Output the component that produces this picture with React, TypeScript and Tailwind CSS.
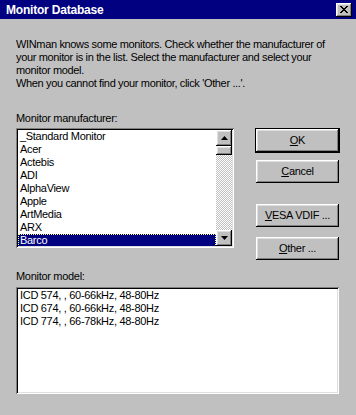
import React from "react";

const raised =
  "bg-[#c0c0c0] shadow-[inset_-1px_-1px_#000,inset_1px_1px_#fff,inset_-2px_-2px_#808080,inset_2px_2px_#dfdfdf]";
const sunken =
  "bg-white shadow-[inset_1px_1px_#808080,inset_-1px_-1px_#fff,inset_2px_2px_#000,inset_-2px_-2px_#dfdfdf]";

const manufacturers = [
  "_Standard Monitor",
  "Acer",
  "Actebis",
  "ADI",
  "AlphaView",
  "Apple",
  "ArtMedia",
  "ARX",
  "Barco",
];

const models = [
  "ICD 574, , 60-66kHz, 48-80Hz",
  "ICD 674, , 60-66kHz, 48-80Hz",
  "ICD 774, , 66-78kHz, 48-80Hz",
];

const Arrow = ({ up }: { up?: boolean }) => (
  <svg width="7" height="4" viewBox="0 0 7 4" className="block">
    {up ? <path d="M3.5 0 7 4H0z" fill="#000" /> : <path d="M0 0h7L3.5 4z" fill="#000" />}
  </svg>
);

const Btn = ({
  children,
  isDefault,
  className = "",
}: {
  children: React.ReactNode;
  isDefault?: boolean;
  className?: string;
}) => (
  <button
    type="button"
    className={`${raised} h-[23px] w-[83px] flex items-center justify-center text-black ${
      isDefault ? "outline outline-1 outline-black" : ""
    } ${className}`}
  >
    {children}
  </button>
);

export default function App() {
  return (
    <div
      className="w-[356px] h-[415px] bg-[#c0c0c0] text-[11px] leading-[13px] tracking-[-0.3px] text-black overflow-hidden"
      style={{ fontFamily: '"Liberation Sans", Arial, sans-serif' }}
    >
      {/* title bar */}
      <div className="h-[19px] bg-[#000080] flex items-center pl-[6px] pr-[4px]">
        <span className="flex-1 text-white font-bold text-[12px] tracking-[-0.2px] pt-[1px]">
          Monitor Database
        </span>
        <div className={`${raised} w-[16px] h-[14px] flex items-center justify-center`}>
          <svg width="8" height="7" viewBox="0 0 8 7" className="block">
            <path
              d="M0 0h2v1h1v1h2V1h1V0h2v1H7v1H6v1H5v1h1v1h1v1h1v1H6V6H5V5H3v1H2v1H0V6h1V5h1V4h1V3H2V2H1V1H0z"
              fill="#000"
            />
          </svg>
        </div>
      </div>

      <div className="pl-4">
        <div className="mt-[19px] whitespace-nowrap tracking-[-0.35px]">
          <div>WINman knows some monitors. Check whether the manufacturer of</div>
          <div>your monitor is in the list. Select the manufacturer and select your</div>
          <div>monitor model.</div>
          <div>When you cannot find your monitor, click 'Other ...'.</div>
        </div>

        <div className="mt-[22px]">Monitor manufacturer:</div>

        <div className="mt-[3px] flex items-start">
          {/* manufacturer list */}
          <div className={`${sunken} w-[218px] h-[120px] p-[2px] flex`}>
            <div className="flex-1 overflow-hidden">
              {manufacturers.map((m) => (
                <div
                  key={m}
                  className={`h-[13px] pl-[2px] whitespace-nowrap ${
                    m === "Barco"
                      ? "bg-[#000080] text-white outline outline-1 outline-dotted outline-[#ffff80] -outline-offset-1"
                      : ""
                  }`}
                >
                  {m}
                </div>
              ))}
            </div>
            <div className="w-[16px] flex flex-col">
              <div className={`${raised} h-[16px] flex items-center justify-center`}>
                <Arrow up />
              </div>
              <div className={`${raised} h-[9px]`} />
              <div className="flex-1 bg-[image:repeating-conic-gradient(#fff_0_25%,#c0c0c0_0_50%)] bg-[length:2px_2px]" />
              <div className={`${raised} h-[16px] flex items-center justify-center`}>
                <Arrow />
              </div>
            </div>
          </div>

          {/* buttons */}
          <div className="ml-[22px] pt-[1px] flex flex-col">
            <Btn isDefault>
              <span>
                <u>O</u>K
              </span>
            </Btn>
            <Btn className="mt-[8px]">
              <span>
                <u>C</u>ancel
              </span>
            </Btn>
            <Btn className="mt-[21px]">
              <span>
                <u>V</u>ESA VDIF ...
              </span>
            </Btn>
            <Btn className="mt-[10px]">
              <span>
                <u>O</u>ther ...
              </span>
            </Btn>
          </div>
        </div>

        <div className="mt-[10px]">Monitor model:</div>

        <div className={`${sunken} mt-[4px] w-[323px] h-[107px] p-[2px]`}>
          {models.map((m) => (
            <div key={m} className="h-[13px] pl-[2px] whitespace-nowrap">
              {m}
            </div>
          ))}
        </div>
      </div>
    </div>
  );
}
